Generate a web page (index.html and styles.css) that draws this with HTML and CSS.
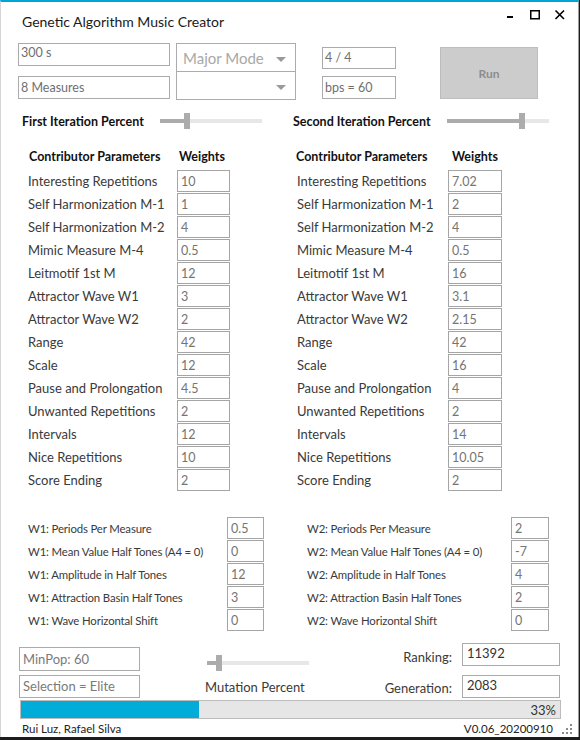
FILE: index.html
```html
<!DOCTYPE html>
<html>
<head>
<meta charset="utf-8">
<link rel="stylesheet" href="styles.css">
</head>
<body>
<div class="window">
  <header class="titlebar">
    <span class="title">Genetic Algorithm Music Creator</span>
    <div class="controls">
      <svg class="c-min" width="10" height="12" viewBox="0 0 10 12"><rect x="2" y="7" width="6" height="2" fill="#000"/></svg>
      <svg class="c-max" width="12" height="12" viewBox="0 0 12 12"><rect x="1.75" y="1.75" width="8.5" height="8" fill="none" stroke="#000" stroke-width="1.5"/></svg>
      <svg class="c-close" width="12" height="12" viewBox="0 0 12 12"><path d="M1.5 1.5 L10 10 M10 1.5 L1.5 10" stroke="#000" stroke-width="1.6"/></svg>
    </div>
  </header>

  <section class="top">
    <div class="col c1">
      <div class="tb">300 s</div>
      <div class="tb mid">8 Measures</div>
    </div>
    <div class="combo">
      <div class="combo-part first"><span>Major Mode</span><i class="arrow"></i></div>
      <div class="combo-part"><span></span><i class="arrow"></i></div>
    </div>
    <div class="col c3">
      <div class="tb mid">4 / 4</div>
      <div class="tb mid">bps = 60</div>
    </div>
    <button class="run">Run</button>
  </section>

  <section class="sliders">
    <span class="slabel l1">First Iteration Percent</span>
    <div class="slider"><div class="fill" style="width:24px"></div><div class="thumb" style="left:24px"></div></div>
    <span class="slabel l2">Second Iteration Percent</span>
    <div class="slider"><div class="fill" style="width:72px"></div><div class="thumb" style="left:72px"></div></div>
  </section>

  <section class="tables">
    <div class="ptable left">
      <div class="phead"><span>Contributor Parameters</span><span>Weights</span></div>
      <div class="prow"><span>Interesting Repetitions</span><div class="box">10</div></div>
      <div class="prow"><span>Self Harmonization M-1</span><div class="box">1</div></div>
      <div class="prow"><span>Self Harmonization M-2</span><div class="box">4</div></div>
      <div class="prow"><span>Mimic Measure M-4</span><div class="box">0.5</div></div>
      <div class="prow"><span>Leitmotif 1st M</span><div class="box">12</div></div>
      <div class="prow"><span>Attractor Wave W1</span><div class="box">3</div></div>
      <div class="prow"><span>Attractor Wave W2</span><div class="box">2</div></div>
      <div class="prow"><span>Range</span><div class="box">42</div></div>
      <div class="prow"><span>Scale</span><div class="box">12</div></div>
      <div class="prow"><span>Pause and Prolongation</span><div class="box">4.5</div></div>
      <div class="prow"><span>Unwanted Repetitions</span><div class="box">2</div></div>
      <div class="prow"><span>Intervals</span><div class="box">12</div></div>
      <div class="prow"><span>Nice Repetitions</span><div class="box">10</div></div>
      <div class="prow"><span>Score Ending</span><div class="box">2</div></div>
    </div>
    <div class="ptable right">
      <div class="phead"><span>Contributor Parameters</span><span>Weights</span></div>
      <div class="prow"><span>Interesting Repetitions</span><div class="box">7.02</div></div>
      <div class="prow"><span>Self Harmonization M-1</span><div class="box">2</div></div>
      <div class="prow"><span>Self Harmonization M-2</span><div class="box">4</div></div>
      <div class="prow"><span>Mimic Measure M-4</span><div class="box">0.5</div></div>
      <div class="prow"><span>Leitmotif 1st M</span><div class="box">16</div></div>
      <div class="prow"><span>Attractor Wave W1</span><div class="box">3.1</div></div>
      <div class="prow"><span>Attractor Wave W2</span><div class="box">2.15</div></div>
      <div class="prow"><span>Range</span><div class="box">42</div></div>
      <div class="prow"><span>Scale</span><div class="box">16</div></div>
      <div class="prow"><span>Pause and Prolongation</span><div class="box">4</div></div>
      <div class="prow"><span>Unwanted Repetitions</span><div class="box">2</div></div>
      <div class="prow"><span>Intervals</span><div class="box">14</div></div>
      <div class="prow"><span>Nice Repetitions</span><div class="box">10.05</div></div>
      <div class="prow"><span>Score Ending</span><div class="box">2</div></div>
    </div>
  </section>

  <section class="waves">
    <div class="wtable left">
      <div class="wrow"><span>W1: Periods Per Measure</span><div class="box">0.5</div></div>
      <div class="wrow"><span>W1: Mean Value Half Tones (A4 = 0)</span><div class="box">0</div></div>
      <div class="wrow"><span>W1: Amplitude in Half Tones</span><div class="box">12</div></div>
      <div class="wrow"><span>W1: Attraction Basin Half Tones</span><div class="box">3</div></div>
      <div class="wrow"><span>W1: Wave Horizontal Shift</span><div class="box">0</div></div>
    </div>
    <div class="wtable right">
      <div class="wrow"><span>W2: Periods Per Measure</span><div class="box">2</div></div>
      <div class="wrow"><span>W2: Mean Value Half Tones (A4 = 0)</span><div class="box">-7</div></div>
      <div class="wrow"><span>W2: Amplitude in Half Tones</span><div class="box">4</div></div>
      <div class="wrow"><span>W2: Attraction Basin Half Tones</span><div class="box">2</div></div>
      <div class="wrow"><span>W2: Wave Horizontal Shift</span><div class="box">0</div></div>
    </div>
  </section>

  <section class="bottom">
    <div class="bleft">
      <div class="tb big">MinPop: 60</div>
      <div class="tb big">Selection = Elite</div>
    </div>
    <div class="bmid">
      <div class="slider"><div class="fill" style="width:9px"></div><div class="thumb" style="left:9px"></div></div>
      <span class="mlabel">Mutation Percent</span>
    </div>
    <div class="bright">
      <span class="rlabel">Ranking:</span><div class="tb rbox">11392</div>
      <span class="rlabel">Generation:</span><div class="tb rbox">2083</div>
    </div>
  </section>

  <div class="progress">
    <div class="pfill" style="width:33%"></div>
    <span class="ptext">33%</span>
  </div>

  <footer class="footer">
    <span>Rui Luz, Rafael Silva</span>
    <span class="ver">V0.06_20200910</span>
    <svg class="grip" width="12" height="12" viewBox="0 0 12 12" fill="#8a8a8a">
      <rect x="8" y="0" width="2" height="2"/>
      <rect x="4" y="4" width="2" height="2"/><rect x="8" y="4" width="2" height="2"/>
      <rect x="0" y="8" width="2" height="2"/><rect x="4" y="8" width="2" height="2"/><rect x="8" y="8" width="2" height="2"/>
    </svg>
  </footer>
</div>
</body>
</html>
```

FILE: styles.css
```css
* { box-sizing: border-box; }
html, body { margin: 0; padding: 0; }
body {
  background: #1c1c1c;
  width: 580px;
  height: 740px;
  overflow: hidden;
  font-family: Lato, "Open Sans", sans-serif;
  color: #333;
}
.window {
  width: 579px;
  height: 737px;
  background: #fff;
  border-top: 2px solid #01a4d6;
  border-left: 1px solid #d6d6d6;
  border-right: 1px solid #9c9c9c;
  display: flex;
  flex-direction: column;
}

/* title bar */
.titlebar {
  height: 40px;
  display: flex;
  align-items: flex-start;
  justify-content: space-between;
}
.title {
  font-size: 14px;
  color: #1a1a1a;
  margin: 11px 0 0 21px;
}
.controls {
  display: flex;
  margin: 7px 12px 0 0;
}
.controls svg { display: block; }
.c-max { margin-left: 14px; }
.c-close { margin-left: 13px; }

/* generic textbox */
.tb {
  border: 1px solid #ababab;
  background: #fff;
  color: #6f6f6f;
  font-size: 12.5px;
  padding: 1px 2px;
  height: 23px;
  white-space: nowrap;
}
.tb.mid { display: flex; align-items: center; padding-top: 0; }

/* top row */
.top {
  margin-top: 1px;
  padding-left: 17px;
  display: flex;
  align-items: flex-start;
  height: 57px;
}
.col { display: flex; flex-direction: column; }
.c1 { width: 152px; gap: 10px; }
.c3 { width: 74px; gap: 7px; margin-top: 4px; margin-left: 26px; }
.c3 .tb:first-child { height: 22px; }
.combo {
  width: 120px;
  height: 57px;
  margin-left: 6px;
  border: 1px solid #acacac;
  display: flex;
  flex-direction: column;
}
.combo-part {
  flex: 1;
  display: flex;
  align-items: center;
  justify-content: space-between;
  padding: 0 9px 0 6px;
}
.combo-part.first { border-bottom: 1px solid #acacac; }
.combo-part span { font-size: 15px; color: #a8a8a8; }
.arrow {
  width: 0; height: 0;
  border-left: 5px solid transparent;
  border-right: 5px solid transparent;
  border-top: 5px solid #9a9a9a;
  margin-top: 3px;
}
.run {
  margin-left: 44px;
  margin-top: 4px;
  width: 98px;
  height: 52px;
  background: #cccccc;
  border: 1px solid #bdbdbd;
  color: #8c8c8c;
  font-family: Lato, sans-serif;
  font-weight: bold;
  font-size: 12px;
  padding: 0;
}

/* sliders */
.sliders {
  margin-top: 12px;
  height: 18px;
  display: flex;
  align-items: center;
}
.slabel {
  font-weight: bold;
  font-size: 12.5px;
  color: #111;
}
.l1 { margin-left: 21px; width: 138px; }
.l2 { margin-left: 31px; width: 154px; }
.slider {
  position: relative;
  width: 102px;
  height: 4px;
  background: #e7e7e7;
}
.slider .fill {
  height: 4px;
  background: #acacac;
}
.slider .thumb {
  position: absolute;
  top: -6px;
  width: 6px;
  height: 16px;
  background: #acacac;
}

/* parameter tables */
.tables {
  margin-top: 17px;
  display: flex;
}
.ptable { display: flex; flex-direction: column; }
.ptable.left { margin-left: 27px; }
.ptable.right { margin-left: 66px; }
.phead {
  height: 18px;
  margin-bottom: 5px;
  display: flex;
  align-items: center;
  font-weight: bold;
  font-size: 12.5px;
  color: #111;
}
.ptable.left .phead span:first-child { width: 151px; padding-left: 1px; }
.ptable.right .phead span:first-child { width: 156px; }
.prow {
  display: flex;
  align-items: center;
  height: 23px;
  font-size: 13px;
  color: #3a3a3a;
}
.prow span { padding-bottom: 1px; }
.ptable.left .prow span { width: 149px; }
.ptable.right .prow span { width: 152px; padding-left: 1px; }
.box {
  height: 22px;
  border: 1px solid #a5a5a5;
  color: #747474;
  font-size: 12.5px;
  padding: 0 3px;
  display: flex;
  align-items: center;
  margin-bottom: 1px;
}
.ptable.left .box { width: 53px; }
.ptable.right .box { width: 54px; }

/* waves */
.waves {
  margin-top: 25px;
  display: flex;
}
.wtable { display: flex; flex-direction: column; }
.wtable.left { margin-left: 27px; }
.wtable.right { margin-left: 43px; }
.wrow {
  display: flex;
  align-items: center;
  height: 23px;
  font-size: 11.4px;
  color: #3a3a3a;
  letter-spacing: -0.15px;
}
.wtable.left .wrow span { width: 199px; }
.wtable.right .wrow span { width: 204px; }
.wtable .box { letter-spacing: 0; }
.wtable.left .box { width: 37px; }
.wtable.right .box { width: 38px; }

/* bottom */
.bottom {
  margin-top: 11px;
  height: 55px;
  display: flex;
}
.bleft {
  margin-left: 18px;
  width: 121px;
  padding-top: 4px;
  display: flex;
  flex-direction: column;
  gap: 4px;
}
.tb.big {
  font-size: 13px;
  color: #7a7a7a;
  height: 24px;
  display: flex;
  align-items: center;
  padding-left: 3px;
}
.bmid {
  margin-left: 65px;
  width: 120px;
  display: flex;
  flex-direction: column;
}
.bmid .slider { margin-top: 18px; margin-left: 2px; }
.mlabel {
  margin-top: 14px;
  font-size: 13px;
  color: #3a3a3a;
}
.bright {
  margin-left: auto;
  margin-right: 18px;
  display: grid;
  grid-template-columns: auto 98px;
  column-gap: 10px;
  row-gap: 8px;
  align-items: center;
}
.rlabel {
  text-align: right;
  font-size: 13px;
  color: #3a3a3a;
  padding-top: 4px;
}
.tb.rbox {
  font-size: 13px;
  color: #333;
  padding: 1px 4px;
}

/* progress */
.progress {
  margin: 2px 0 0 19px;
  width: 541px;
  height: 19px;
  border: 1px solid #bcbcbc;
  background: #e6e6e6;
  display: flex;
  align-items: center;
  position: relative;
}
.pfill {
  height: 100%;
  background: #01acd8;
}
.ptext {
  position: absolute;
  right: 4px;
  font-size: 13px;
  color: #333;
}

/* footer */
.footer {
  height: 18px;
  display: flex;
  align-items: center;
  padding-left: 21px;
  font-size: 11.5px;
  color: #222;
}
.ver { margin-left: auto; margin-right: 9px; }
.grip { margin-right: 4px; margin-top: 4px; }
```
